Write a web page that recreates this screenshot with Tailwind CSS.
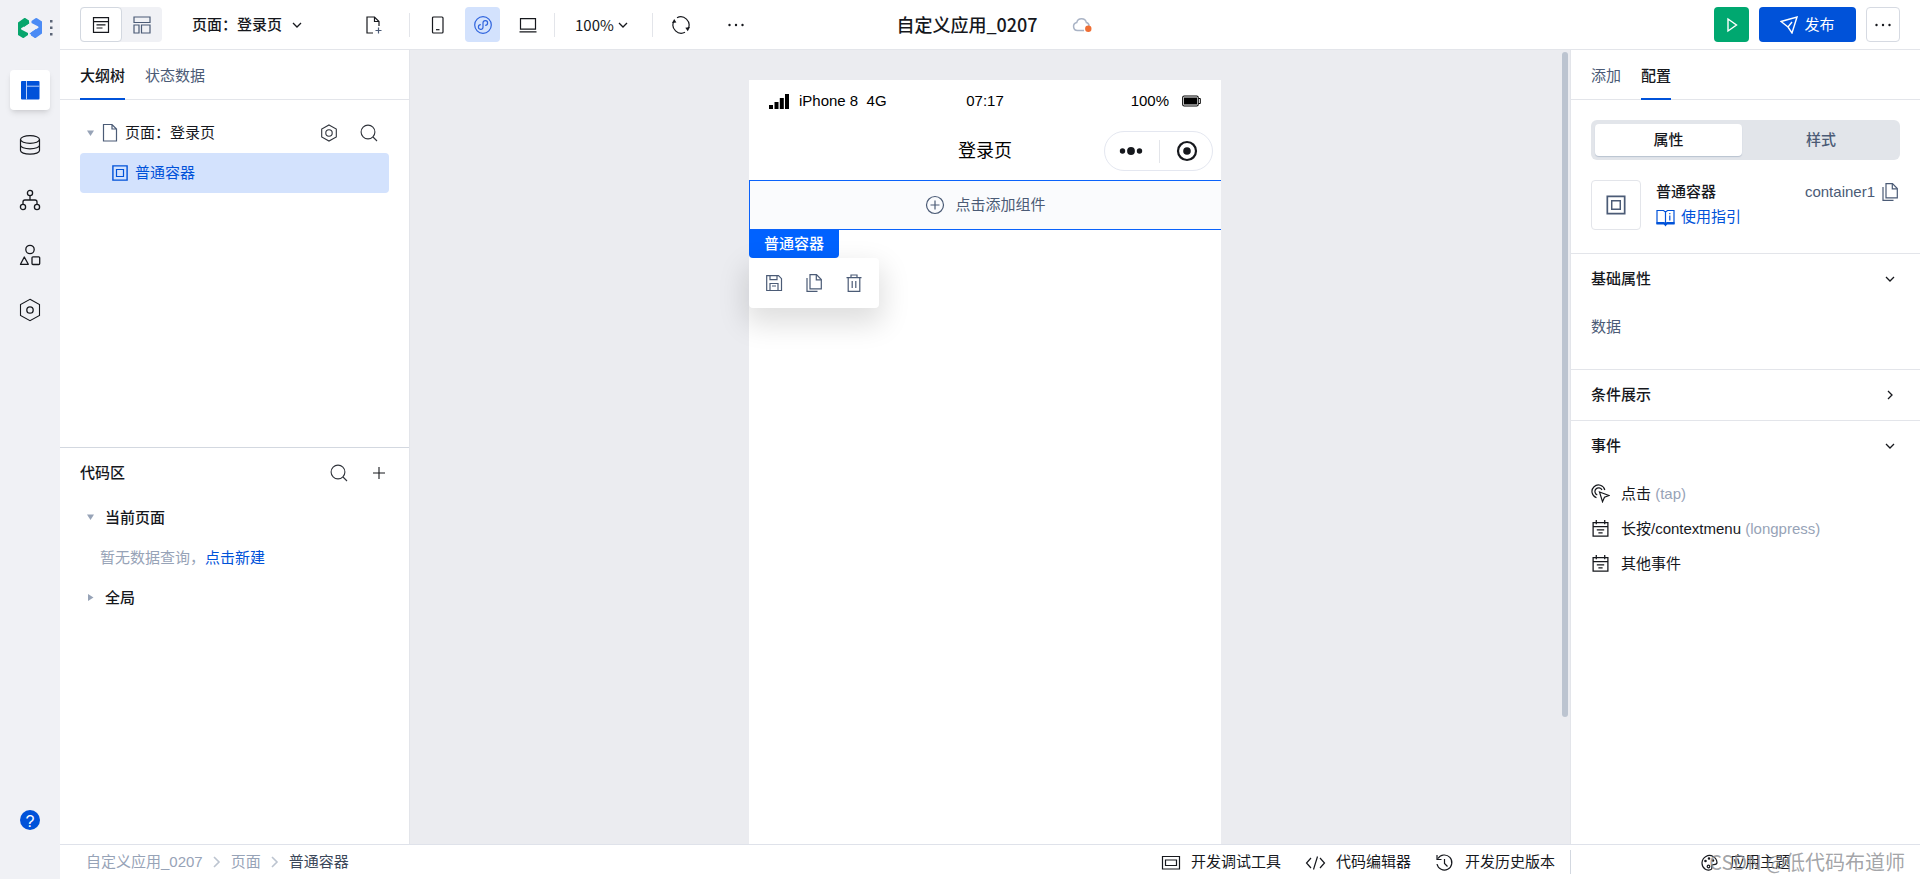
<!DOCTYPE html>
<html lang="zh-CN">
<head>
<meta charset="utf-8">
<title>自定义应用_0207</title>
<script src="https://cdn.jsdelivr.net/npm/@tailwindcss/browser@4"></script>
</head>
<body class="flex h-screen overflow-hidden bg-white font-['Liberation_Sans','Noto_Sans_CJK_SC',sans-serif] text-[15px] leading-5 text-[#16181d]">
<svg class="hidden" aria-hidden="true">
  <symbol id="chev-down" viewBox="0 0 12 12"><path d="M2 4l4 4 4-4" fill="none" stroke="currentColor" stroke-width="1.3"/></symbol>
  <symbol id="chev-right" viewBox="0 0 12 12"><path d="M4 2l4 4-4 4" fill="none" stroke="currentColor" stroke-width="1.3"/></symbol>
  <symbol id="search" viewBox="0 0 18 18"><g fill="none" stroke="currentColor" stroke-width="1.1"><circle cx="8" cy="8" r="6.9"/><path d="M13 13l4 4"/></g></symbol>
  <symbol id="nested" viewBox="0 0 18 18"><g fill="none" stroke="currentColor" stroke-width="1.4"><path d="M1.9 1.9h14.2v14.2H1.9z"/><path d="M5.5 5.5h7v7h-7z" stroke-width="1.2"/></g></symbol>
  <symbol id="copy" viewBox="0 0 18 20"><g fill="none" stroke="currentColor" stroke-width="1.2"><path d="M5 1.7h6.500l4.800 4.800v9.300H5z"/><path d="M11.300 2v4.800h4.800"/><path d="M2 5v13.300h10.500"/></g></symbol>
  <symbol id="event" viewBox="0 0 18 18"><g fill="none" stroke="currentColor" stroke-width="1.2"><path d="M2 3.500h14v12.700H2zM2 7.200h14M5 1v4M13 1v4M5.500 10.300h7M7 13.200h4"/></g></symbol>
</svg>

<aside class="flex w-[60px] shrink-0 flex-col items-center bg-[#f0f1f5]">
  <div class="flex h-[55px] w-full items-center justify-end gap-[8px] pr-[7px]">
    <svg class="h-[20px] w-[24px]" viewBox="0 0 24 20"><path fill="#07a56c" d="M0 4.500L6 .3q.8-.4 1.500 0L11 2.600v3L3.500 10q-1.200 1 .2 1.700L10 15v2l-4 2.700q-.8.400-1.500 0L0 17z"/><path fill="#4b8bf5" d="M24 15.500l-6 4.200q-.8.400-1.500 0L13 17.400v-2.800L20 10q1.200-1-.2-1.700L13.500 5V3l4-2.700q.8-.4 1.500 0L24 3.500z"/><path fill="#4b8bf5" d="M11.500 15.500l6.500-4.500v8.500l-1 .3z"/><path fill="#07a56c" d="M11.500 5L6 9V.5l1-.3z"/></svg>
    <svg class="h-4 w-[3px]" viewBox="0 0 3 16" fill="#5b6577"><rect width="2.500" height="2.500" y="0"/><rect width="2.500" height="2.500" y="6.500"/><rect width="2.500" height="2.500" y="13"/></svg>
  </div>
  <nav class="flex w-full flex-col items-center gap-[15px] pt-[15px]">
    <button aria-label="页面设计" class="grid size-10 place-items-center rounded bg-white text-[#0052d9] shadow-md"><svg class="size-5" viewBox="0 0 20 20"><rect x="1" y="1" width="18.500" height="18.500" rx="1" fill="currentColor"/><path d="M6.500 1v18.500M6.500 6.200h13" stroke="#b9d0f8" stroke-width="1"/></svg></button>
    <button aria-label="数据源" class="grid size-10 place-items-center"><svg class="size-[22px]" viewBox="0 0 22 22" fill="none" stroke="currentColor" stroke-width="1.200"><ellipse cx="11" cy="5.500" rx="9.500" ry="3.800"/><path d="M1.500 5.500v11c0 2 4 3.700 9.500 3.700s9.500-1.700 9.500-3.700v-11M1.500 11.200c0 2 4 3.700 9.500 3.700s9.500-1.700 9.500-3.700"/></svg></button>
    <button aria-label="工作流" class="grid size-10 place-items-center"><svg class="size-[22px]" viewBox="0 0 22 22" fill="none" stroke="currentColor" stroke-width="1.300"><circle cx="11" cy="4" r="2.600"/><circle cx="4" cy="18" r="2.600"/><circle cx="18" cy="18" r="2.600"/><path d="M11 6.600V11M4 15.400V13q0-2 2-2h10q2 0 2 2v2.400"/></svg></button>
    <button aria-label="组件库" class="grid size-10 place-items-center"><svg class="size-[22px]" viewBox="0 0 22 22" fill="none" stroke="currentColor" stroke-width="1.300"><circle cx="11" cy="5.500" r="4.200"/><path d="M5.300 13L1.500 20.300h7.800z" stroke-linejoin="round"/><rect x="13" y="12.800" width="7.700" height="7.700" rx="1"/></svg></button>
    <button aria-label="设置" class="grid size-10 place-items-center"><svg class="size-6" viewBox="0 0 24 24" fill="none" stroke="currentColor" stroke-width="1.100"><path d="M12 1.300l9.500 5.200v11L12 22.700l-9.500-5.200v-11z"/><circle cx="12" cy="12" r="3.200" stroke-width="1.300"/></svg></button>
  </nav>
  <button aria-label="帮助" class="mt-auto mb-[49px] grid size-5 place-items-center rounded-full bg-[#0052d9] text-base text-white">?</button>
</aside>

<div class="flex min-w-0 flex-1 flex-col">
  <header class="grid h-[50px] shrink-0 grid-cols-[1fr_auto_1fr] items-center border-b border-[#e3e5ea] px-5">
    <div class="flex items-center">
      <div class="flex h-[35px] rounded bg-[#f0f1f5]">
        <button aria-label="列表视图" class="grid w-[42px] place-items-center rounded border border-[#d3d8e0] bg-white"><svg class="size-[18px]" viewBox="0 0 18 18" fill="none" stroke="currentColor" stroke-width="1.200"><path d="M1.500 1.700h15v14.600h-15zM1.500 5.700h15M4.500 8.800h9M4.500 12h6"/></svg></button>
        <button aria-label="布局视图" class="grid w-10 place-items-center text-[#4b5b76]"><svg class="size-[18px]" viewBox="0 0 18 18" fill="none" stroke="currentColor" stroke-width="1.200"><path d="M1 1h16v5.500H1zM1 9h5v8H1zM8.500 9H17v8H8.500z"/></svg></button>
      </div>
      <button class="ml-[30px] flex items-center gap-[9px] font-medium">页面：登录页<svg class="size-3"><use href="#chev-down"/></svg></button>
      <button aria-label="新建页面" class="ml-[62px]"><svg class="h-[20px] w-[18px]" viewBox="0 0 18 20" fill="none" stroke="currentColor" stroke-width="1.200"><path d="M8 18H2V2h7.500L14 6.500V11M9.500 2v4.500H14"/><path d="M13.500 12.500v6M10.500 15.500h6" stroke="#4b5b76"/></svg></button>
      <div class="ml-[26px] h-6 w-px bg-[#e3e5ea]"></div>
      <button aria-label="手机" class="ml-[10px] grid size-[35px] place-items-center"><svg class="size-[18px]" viewBox="0 0 18 18" fill="none" stroke="currentColor" stroke-width="1.200"><rect x="3.500" y="1" width="10.500" height="16" rx="1"/><path d="M7 13.700h3.500"/></svg></button>
      <button aria-label="小程序" class="ml-[10px] grid size-[35px] place-items-center rounded bg-[#d3e2fd] text-[#2f64dd]"><svg class="size-[18px]" viewBox="0 0 18 18" fill="none" stroke="currentColor" stroke-width="1.200"><circle cx="9" cy="9" r="8.300"/><path d="M6.800 8.700A2.300 2.300 0 1 0 9 11.200V6.800a2.300 2.300 0 1 1 2.200 2.500"/></svg></button>
      <button aria-label="电脑" class="ml-[10px] grid size-[35px] place-items-center"><svg class="size-[18px]" viewBox="0 0 18 18" fill="none" stroke="currentColor" stroke-width="1.200"><path d="M1.500 2.700h15v10.500h-15zM.5 15.800h17"/></svg></button>
      <div class="ml-[9px] h-6 w-px bg-[#e3e5ea]"></div>
      <button class="ml-[20px] flex items-center gap-[3px] font-['Noto_Sans_CJK_SC',sans-serif]">100%<svg class="size-3"><use href="#chev-down"/></svg></button>
      <div class="ml-[23px] h-6 w-px bg-[#e3e5ea]"></div>
      <button aria-label="刷新" class="ml-[18px]"><svg class="size-[20px]" viewBox="0 0 20 20" fill="none" stroke="currentColor" stroke-width="1.200"><path d="M6 2.700A8.300 8.300 0 0 1 17.300 13.500M14 17.300A8.300 8.300 0 0 1 2.700 6.500"/><path d="M1 8l2.200-4 2.200 3.500zM19 12l-2.200 4.200-2.500-3.500z" fill="currentColor" stroke="none"/></svg></button>
      <button aria-label="更多" class="ml-[36px]"><svg class="h-3 w-[18px]" viewBox="0 0 18 12" fill="currentColor"><circle cx="2.500" cy="6" r="1.200"/><circle cx="9" cy="6" r="1.200"/><circle cx="15.500" cy="6" r="1.200"/></svg></button>
    </div>
    <div class="flex items-center gap-[34px] pl-2">
      <h1 class="pb-[2px] font-['Noto_Sans_CJK_SC',sans-serif] text-lg leading-6 font-medium">自定义应用_0207</h1>
      <svg class="h-[16px] w-[20px]" viewBox="0 0 20 16" fill="none"><path d="M12 13.500H5.500a4 4 0 0 1-.8-7.900 5 5 0 0 1 9.700 0c2 .5 2.600 1.900 2.600 3.400" stroke="#a9b3c5" stroke-width="1.500"/><circle cx="16.300" cy="11.700" r="3.200" fill="#ef6f35"/></svg>
    </div>
    <div class="flex h-[35px] justify-end gap-[10px]">
      <button aria-label="预览" class="grid w-[35px] place-items-center rounded bg-[#00a870] text-white"><svg class="size-4" viewBox="0 0 16 16" fill="none" stroke="currentColor" stroke-width="1.400"><path d="M4 2l8.500 6L4 14z"/></svg></button>
      <button class="flex w-[97px] items-center justify-center gap-[6px] rounded bg-[#0052d9] text-white"><svg class="size-[18px]" viewBox="0 0 18 18" fill="none" stroke="currentColor" stroke-width="1.400"><path d="M1 5.500L17 1l-5 16-4-6zM8 11l4-5"/></svg>发布</button>
      <button aria-label="更多操作" class="grid w-[34px] place-items-center rounded border border-[#d6dae2]"><svg class="h-3 w-[18px]" viewBox="0 0 18 12" fill="currentColor"><circle cx="2.500" cy="6" r="1.200"/><circle cx="9" cy="6" r="1.200"/><circle cx="15.500" cy="6" r="1.200"/></svg></button>
    </div>
  </header>

  <div class="flex min-h-0 flex-1">
    <section class="flex w-[350px] shrink-0 flex-col border-r border-[#e3e5ea]">
      <div class="flex min-h-0 flex-1 flex-col">
        <div class="flex h-[50px] shrink-0 gap-5 border-b border-[#e3e5ea] px-5">
          <button class="-mb-px border-b-2 border-[#0052d9] pt-[3px] font-medium">大纲树</button>
          <button class="pt-[2px] text-[#4b5b76]">状态数据</button>
        </div>
        <div class="px-5 pt-[13px]">
          <div class="flex h-10 items-center pr-[11px] pl-[7px]">
            <svg class="size-[7px] text-[#97a3b7]" viewBox="0 0 7 7"><path d="M0 .5h7L3.500 6z" fill="currentColor"/></svg>
            <svg class="ml-[8px] h-[20px] w-[16px] text-[#4b5b76]" viewBox="0 0 16 20" fill="none" stroke="currentColor" stroke-width="1.200"><path d="M1.500 1.500H10l4.500 4.500v12h-13zM10 1.500V6h4.500"/></svg>
            <span class="ml-[7px]">页面：登录页</span>
            <button aria-label="页面设置" class="ml-auto text-[#30343c]"><svg class="size-[18px]" viewBox="0 0 18 18" fill="none" stroke="currentColor" stroke-width="1.100"><path d="M9 1l7.300 4v8L9 17l-7.300-4V5z"/><circle cx="9" cy="9" r="3.200"/></svg></button>
            <button aria-label="搜索" class="ml-[22px] text-[#30343c]"><svg class="size-[18px]"><use href="#search"/></svg></button>
          </div>
          <div class="flex h-10 items-center gap-[6px] rounded bg-[#d3e2fd] pl-[31px] text-[#0052d9]"><svg class="size-[18px]"><use href="#nested"/></svg>普通容器</div>
        </div>
      </div>
      <div class="min-h-0 flex-1 border-t border-[#d3d8e0] px-5">
        <div class="flex h-[50px] items-center pr-[1px]">
          <h2 class="font-medium">代码区</h2>
          <button aria-label="搜索代码" class="ml-auto text-[#30343c]"><svg class="size-[18px]"><use href="#search"/></svg></button>
          <button aria-label="新增" class="ml-[22px]"><svg class="size-[18px]" viewBox="0 0 18 18" stroke="currentColor" stroke-width="1.100"><path d="M9 3v12M3 9h12"/></svg></button>
        </div>
        <div class="flex h-10 items-center gap-[11px] pl-[7px] font-medium"><svg class="size-[7px] text-[#97a3b7]" viewBox="0 0 7 7"><path d="M0 .5h7L3.500 6z" fill="currentColor"/></svg>当前页面</div>
        <div class="flex h-10 items-center pl-5 text-[#97a3b7]">暂无数据查询，<a href="#" class="text-[#0052d9]">点击新建</a></div>
        <div class="flex h-10 items-center gap-[11px] pl-[7px] font-medium"><svg class="size-[7px] text-[#97a3b7]" viewBox="0 0 7 7"><path d="M1 0v7l5.500-3.500z" fill="currentColor"/></svg>全局</div>
      </div>
    </section>

    <main class="flex min-w-0 flex-1 bg-[#ebecf0]">
      <div class="flex flex-1 justify-center pt-[30px]">
        <div class="flex w-[472px] flex-col bg-white">
          <div class="grid h-[42px] grid-cols-3 items-center px-5 text-black">
            <div class="flex items-center gap-[10px]"><svg class="h-4 w-5" viewBox="0 0 20 16"><path d="M0 12h4v4H0zM5.500 9h4v7h-4zM10.800 5h4v11h-4zM16 1h4v15h-4z"/></svg><span class="whitespace-pre">iPhone 8  4G</span></div>
            <div class="text-center">07:17</div>
            <div class="flex items-center justify-end gap-[13px]">100%<svg class="h-[12px] w-[19px]" viewBox="0 0 19 12"><rect x=".7" y="1" width="15.500" height="10" rx="1.500" fill="none" stroke="#000" stroke-width="1.100"/><path d="M2 2.500h13v7H2z"/><path d="M16.500 3.500h1.800v5h-1.800" fill="none" stroke="#000"/></svg></div>
          </div>
          <div class="grid h-[58px] grid-cols-[1fr_auto_1fr] items-center px-2 text-lg text-black">
            <span></span><span>登录页</span>
            <div class="flex h-10 w-[109px] items-center justify-center gap-4 justify-self-end rounded-full border border-[#e4e7f0]">
              <button aria-label="菜单"><svg class="h-3 w-6" viewBox="0 0 24 12" fill="#16181d"><circle cx="3.500" cy="6" r="2.700"/><circle cx="12" cy="6" r="3.900"/><circle cx="20.500" cy="6" r="2.700"/></svg></button>
              <div class="h-[23px] w-px bg-[#e3e5ea]"></div>
              <button aria-label="关闭"><svg class="size-[22px]" viewBox="0 0 22 22"><circle cx="11" cy="11" r="9" fill="none" stroke="#16181d" stroke-width="2.200"/><circle cx="11" cy="11" r="3.800" fill="#16181d"/></svg></button>
            </div>
          </div>
          <button class="flex h-[50px] items-center justify-center gap-[10px] border border-r-0 border-[#0a62fb] bg-[#fafbfd] text-[#4b5b76]"><svg class="size-5" viewBox="0 0 20 20" fill="none" stroke="currentColor" stroke-width="1.200"><circle cx="10" cy="10" r="8.500"/><path d="M10 5.500v9M5.500 10h9"/></svg>点击添加组件</button>
          <div class="flex h-7 w-[90px] items-center justify-center rounded-b bg-[#0062ff] font-medium text-white">普通容器</div>
          <div class="flex h-[50px] w-[130px] items-center justify-center gap-[22px] rounded bg-white text-[#4b5b76] shadow-[0_12px_28px_4px_rgba(0,0,0,0.13)]">
            <button aria-label="保存"><svg class="size-[18px]" viewBox="0 0 18 18" fill="none" stroke="currentColor" stroke-width="1.200"><path d="M1.700 1.700h11.800l3 3v11.800H1.700zM5 1.700v4h7v-4M5 16.300V9.500h8v6.800M7 12h4"/></svg></button>
            <button aria-label="复制"><svg class="h-5 w-[18px]"><use href="#copy"/></svg></button>
            <button aria-label="删除"><svg class="size-[18px]" viewBox="0 0 18 18" fill="none" stroke="currentColor" stroke-width="1.200"><path d="M1.500 3.700h15M6 3.500V1h6v2.500M3.200 3.700v13.600h11.600V3.700M7.200 7v7M10.800 7v7"/></svg></button>
          </div>
        </div>
      </div>
      <div class="w-[10px] pt-[2px] pl-[2px]"><div class="h-[84%] w-[6px] rounded-full bg-[#bcc4d0]"></div></div>
    </main>

    <section class="w-[350px] shrink-0 border-l border-[#e3e5ea]">
      <div class="flex h-[50px] gap-5 border-b border-[#e3e5ea] px-5">
        <button class="pt-[2px] text-[#4b5b76]">添加</button>
        <button class="-mb-px border-b-2 border-[#0052d9] pt-[3px] font-medium">配置</button>
      </div>
      <div class="border-b border-[#e3e5ea] px-5 pt-5 pb-[23px]">
        <div class="flex h-10 gap-1 rounded-md bg-[#e2e5ea] p-1">
          <button class="w-[147px] rounded-sm bg-white font-medium shadow-[0_1px_1px_#b9c2d0]">属性</button>
          <button class="flex-1 font-medium text-[#4b5b76]">样式</button>
        </div>
        <div class="mt-5 flex h-[50px]">
          <div class="grid w-[50px] place-items-center rounded border border-[#e3e5ea] text-[#4b5b76]"><svg class="size-[22px]"><use href="#nested"/></svg></div>
          <div class="ml-[15px] flex flex-col gap-[5px]">
            <span class="pt-[2px] font-medium">普通容器</span>
            <a href="#" class="flex items-center gap-[6px] text-[#0052d9]"><svg class="size-[19px]" viewBox="0 0 19 19" fill="none" stroke="currentColor" stroke-width="1.200"><path d="M1 2.500h6.500l2 1.500v12H1zM18 2.500h-6.500l-2 1.500v12H18z"/><path d="M.5 15h7.500l1.500 2 1.500-2h7.500" stroke-width="1.800"/><path d="M13.800 7.500v5M13.800 5v1.300"/></svg>使用指引</a>
          </div>
          <div class="ml-auto flex h-6 items-center gap-[6px] pr-[1px] text-[#4b5b76]">container1<button aria-label="复制标识"><svg class="h-5 w-[18px]"><use href="#copy"/></svg></button></div>
        </div>
      </div>
      <div class="border-b border-[#e3e5ea] px-5 pb-[32px]">
        <button class="flex h-[50px] w-full items-center justify-between pr-1 font-medium">基础属性<svg class="size-3"><use href="#chev-down"/></svg></button>
        <div class="pt-[13px] text-[#4b5b76]">数据</div>
      </div>
      <div class="border-b border-[#e3e5ea] px-5">
        <button class="flex h-[50px] w-full items-center justify-between pr-1 font-medium">条件展示<svg class="size-3"><use href="#chev-right"/></svg></button>
      </div>
      <div class="px-5">
        <button class="flex h-[50px] w-full items-center justify-between pr-1 font-medium">事件<svg class="size-3"><use href="#chev-down"/></svg></button>
        <ul class="pt-[5px]">
          <li class="flex h-[35px] items-center gap-[11px]"><svg class="size-[19px]" viewBox="0 0 19 19" fill="none" stroke="currentColor" stroke-width="1.200"><path d="M8.500 8l9.500 3.500-4.500 1.700-2 4.500zM5.500 13.700A6.500 6.500 0 1 1 13.800 6M6.300 11A3.700 3.700 0 1 1 11 6"/></svg><span>点击 <span class="text-[#97a3b7]">(tap)</span></span></li>
          <li class="flex h-[35px] items-center gap-[11px]"><svg class="size-[19px]"><use href="#event"/></svg><span>长按/contextmenu <span class="text-[#97a3b7]">(longpress)</span></span></li>
          <li class="flex h-[35px] items-center gap-[11px]"><svg class="size-[19px]"><use href="#event"/></svg><span>其他事件</span></li>
        </ul>
      </div>
    </section>
  </div>

  <footer class="relative flex h-[35px] shrink-0 items-center border-t border-[#dfe2ea]">
    <nav class="flex items-center gap-[10px] pl-[26px] text-[#97a3b7]">
      <a href="#">自定义应用_0207</a><svg class="h-[12px] w-[8px]" viewBox="0 0 8 12" fill="none" stroke="#bcc4d0" stroke-width="1.600"><path d="M1 1l5 5-5 5"/></svg>
      <a href="#">页面</a><svg class="h-[12px] w-[8px]" viewBox="0 0 8 12" fill="none" stroke="#bcc4d0" stroke-width="1.600"><path d="M1 1l5 5-5 5"/></svg>
      <a href="#" class="text-[#3b4759]">普通容器</a>
    </nav>
    <div class="ml-auto flex items-center gap-[24px] pr-[15px]">
      <button class="flex items-center gap-[10px]"><svg class="size-5" viewBox="0 0 20 20" fill="none" stroke="currentColor" stroke-width="1.200"><path d="M1.500 4.500h17v12.500h-17z"/><path d="M4.500 8h11v5.500h-11z"/></svg>开发调试工具</button>
      <button class="flex items-center gap-[10px]"><svg class="h-4 w-[21px]" viewBox="0 0 21 16" fill="none" stroke="currentColor" stroke-width="1.200"><path d="M6 4L1.500 9 6 14M15 4l4.500 5-4.500 5M12.500 2.500l-4 13"/></svg>代码编辑器</button>
      <button class="flex items-center gap-[11px]"><svg class="size-[19px]" viewBox="0 0 19 19" fill="none" stroke="currentColor" stroke-width="1.200"><path d="M3 5.500A7.500 7.500 0 1 1 2 11M2 2v4.500h4.500M9.500 6v4.500l3 3"/></svg>开发历史版本</button>
    </div>
    <div class="flex h-6 w-[350px] items-center justify-center border-l border-[#d3d8e0]">
      <button class="flex items-center gap-[12px]"><svg class="size-[17px]" viewBox="0 0 17 17" fill="none" stroke="currentColor" stroke-width="1.200"><path d="M4 15A7.500 7.500 0 1 1 16 8.500c0 3-3.500 1.700-5 2.500-1 .8.500 2.500-.5 4.200-1.500 1.500-5 1-6.500-.2z"/><circle cx="4.500" cy="7" r=".7"/><circle cx="8" cy="4.500" r=".7"/><circle cx="12" cy="6.500" r=".7"/><circle cx="7.500" cy="12.500" r="1.300"/></svg>应用主题</button>
    </div>
    <div class="pointer-events-none absolute right-[15px] font-['Noto_Sans_CJK_SC',sans-serif] text-xl text-[#8b8d91]/80">CSDN @低代码布道师</div>
  </footer>
</div>
</body>
</html>
